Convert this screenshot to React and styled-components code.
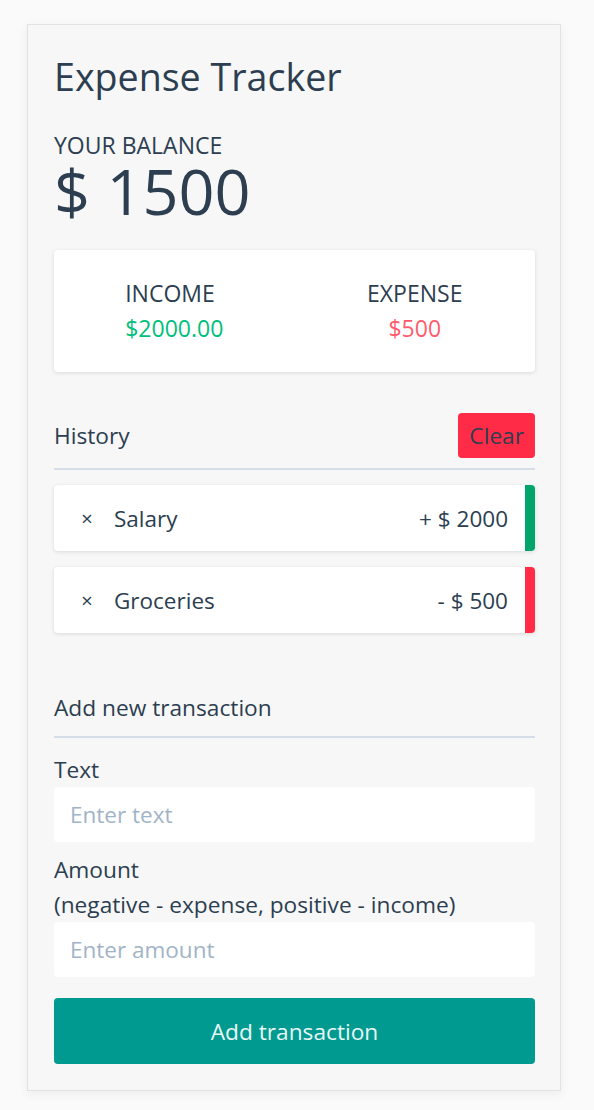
import React from 'react'
import styled, { createGlobalStyle } from 'styled-components'

const GlobalStyle = createGlobalStyle`
    * { box-sizing: border-box; }
    body {
        margin: 0;
        background: #fafafa;
        font-family: "Open Sans", "Noto Sans", sans-serif;
        color: #2c3e50;
    }
`

const Card = styled.div`
    width: 534px;
    margin: 24px 0 20px 27px;
    padding: 29px 25px 26px 26px;
    background: #f7f7f7;
    border: 1px solid #e2e2e2;
    box-shadow: 0 3px 10px rgba(0, 0, 0, 0.06);
    display: flex;
    flex-direction: column;
`

const Title = styled.h2`
    margin: 0;
    font-size: 37.6px;
    line-height: 46px;
    font-weight: 400;
`

const BalanceLabel = styled.h4`
    margin: 32px 0 0;
    font-size: 23px;
    line-height: 26px;
    font-weight: 400;
    text-transform: uppercase;
`

const Balance = styled.h1`
    margin: 0;
    font-size: 63px;
    line-height: 66px;
    font-weight: 400;
`

const IncExp = styled.div`
    margin-top: 26px;
    height: 122px;
    background: #fff;
    border-radius: 4px;
    box-shadow: 0 1px 4px rgba(0, 0, 0, 0.12);
    display: grid;
    grid-template-columns: 1fr 1fr;
    align-items: center;
    justify-items: center;
`

const Stat = styled.div`
    display: flex;
    flex-direction: column;
    align-items: ${p => p.center ? 'center' : 'flex-start'};
    font-size: 23px;
    line-height: 35px;
`

const StatValue = styled.div`
    color: ${p => p.minus ? '#ff5b6b' : '#00bf7b'};
`

const SectionHead = styled.div`
    margin-top: ${p => p.top}px;
    padding-bottom: ${p => p.pad}px;
    border-bottom: 2px solid #d5dde7;
    display: flex;
    justify-content: space-between;
    align-items: center;
    font-size: 22.7px;
    line-height: 26px;
`

const ClearButton = styled.button`
    height: 45px;
    padding: 0 11px;
    border: none;
    border-radius: 4px;
    background: #ff2b47;
    color: #2c3e50;
    font-family: inherit;
    font-size: 22.7px;
`

const List = styled.ul`
    list-style: none;
    margin: 15px 0 0;
    padding: 0;
    display: flex;
    flex-direction: column;
    gap: 16px;
`

const Item = styled.li`
    height: 66px;
    background: #fff;
    border-radius: 4px;
    border-right: 10px solid ${p => p.minus ? '#ff2b47' : '#00a56b'};
    box-shadow: 0 1px 4px rgba(0, 0, 0, 0.12);
    display: flex;
    align-items: center;
    padding: 0 17px 0 24px;
    font-size: 22.5px;
`

const DeleteBtn = styled.button`
    width: 18px;
    margin-right: 18px;
    padding: 0;
    border: none;
    background: none;
    color: #2c3e50;
    font-family: inherit;
    font-size: 20px;
`

const ItemText = styled.span`
    flex: 1;
`

const Form = styled.form`
    display: flex;
    flex-direction: column;
`

const Label = styled.label`
    margin-top: ${p => p.top}px;
    font-size: 22.7px;
    line-height: 35px;
`

const Input = styled.input`
    height: 55px;
    border: none;
    border-radius: 4px;
    background: #fff;
    padding: 0 16px;
    font-family: inherit;
    font-size: 22.5px;
    color: #2c3e50;
    outline: none;
    &::placeholder {
        color: #a1b4c7;
    }
`

const SubmitButton = styled.button`
    margin-top: 21px;
    height: 66px;
    border: none;
    border-radius: 4px;
    background: #009a91;
    color: #eaf7f5;
    font-family: inherit;
    font-size: 22.7px;
`

const transactions = [
    { id: 1, text: 'Salary', amount: 2000 },
    { id: 2, text: 'Groceries', amount: -500 },
]

export default function App() {
    return (
        <>
            <GlobalStyle />
            <Card>
                <Title>Expense Tracker</Title>
                <BalanceLabel>Your Balance</BalanceLabel>
                <Balance>$ 1500</Balance>

                <IncExp>
                    <Stat>
                        <div>INCOME</div>
                        <StatValue>$2000.00</StatValue>
                    </Stat>
                    <Stat center>
                        <div>EXPENSE</div>
                        <StatValue minus>$500</StatValue>
                    </Stat>
                </IncExp>

                <SectionHead top={41} pad={10}>
                    <span>History</span>
                    <ClearButton>Clear</ClearButton>
                </SectionHead>
                <List>
                    {transactions.map(t => (
                        <Item key={t.id} minus={t.amount < 0}>
                            <DeleteBtn>×</DeleteBtn>
                            <ItemText>{t.text}</ItemText>
                            <span>{t.amount < 0 ? '-' : '+'} $ {Math.abs(t.amount)}</span>
                        </Item>
                    ))}
                </List>

                <SectionHead top={62} pad={15}>
                    <span>Add new transaction</span>
                </SectionHead>
                <Form onSubmit={e => e.preventDefault()}>
                    <Label top={14}>Text</Label>
                    <Input type="text" placeholder="Enter text" />
                    <Label top={10}>Amount<br />(negative - expense, positive - income)</Label>
                    <Input type="number" placeholder="Enter amount" />
                    <SubmitButton>Add transaction</SubmitButton>
                </Form>
            </Card>
        </>
    )
}
